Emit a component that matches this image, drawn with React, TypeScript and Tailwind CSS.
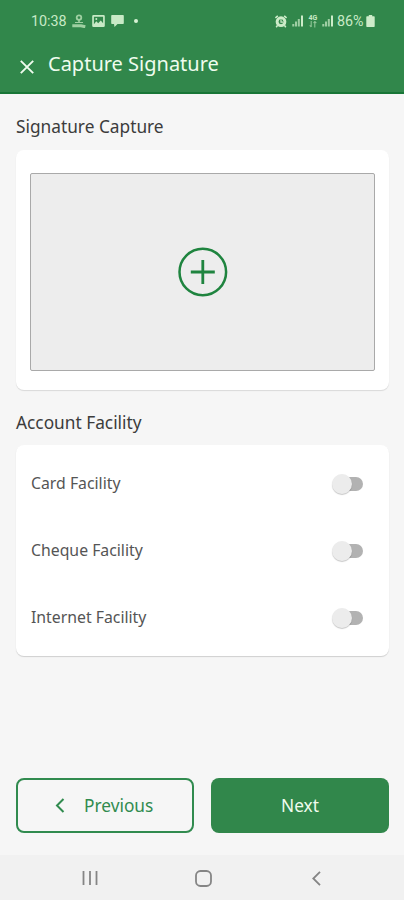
import { useState } from "react";

const FACILITIES = ["Card Facility", "Cheque Facility", "Internet Facility"];

function SignalIcon() {
  return (
    <svg width="12" height="12" viewBox="0 0 12 12" fill="#cdecc9">
      <rect x="0.3" y="9" width="2" height="2.500" opacity="0.700" />
      <rect x="3" y="6.500" width="2" height="5" opacity="0.700" />
      <rect x="5.800" y="4" width="2" height="7.500" opacity="0.700" />
      <rect x="9" y="0.500" width="2" height="11" />
    </svg>
  );
}

function StatusBar() {
  return (
    <div className="flex h-[42px] items-center pl-[31px] pr-[29px] font-[Roboto,sans-serif] text-[14.3px] text-[#c8eac6]">
      <span className="w-[41px] whitespace-nowrap pt-[2px]">10:38</span>
      <svg width="14" height="14" viewBox="0 0 14 14" fill="none" stroke="#9fd0a2">
        <circle cx="7" cy="3.600" r="2.300" strokeWidth="1.800" />
        <path d="M7 6v3" strokeWidth="1.600" />
        <path d="M3 8.500h8" strokeWidth="1" />
        <path d="M.3 11.800h8.700l4.300 1" strokeWidth="3" />
      </svg>
      <svg className="ml-[6px]" width="13" height="12" viewBox="0 0 13 12" fill="#c8eac6">
        <path
          fillRule="evenodd"
          d="M1.500 0h10Q12.800 0 12.800 1.300v9.400Q12.800 12 11.500 12h-10Q.2 12 .2 10.700V1.300Q.2 0 1.500 0zM1.900 1.800v7.400L4.300 6.200 6.200 8.300 8.800 5.500l2.300 2.700V1.800z"
        />
        <circle cx="4.300" cy="4" r="1" />
      </svg>
      <svg className="ml-[6px]" width="13" height="12" viewBox="0 0 13 12" fill="#c8eac6">
        <path d="M1 0h11q.8 0 .8.800v7.400q0 .8-.8.800H6.500L3.500 12 3 9H1q-.8 0-.8-.8V.8Q.2 0 1 0z" />
      </svg>
      <span className="ml-[10px] size-[4px] rounded-full bg-[#d8f2d5]" />

      <div className="ml-auto flex items-center">
        <svg width="12" height="13" viewBox="0 0 12 13" fill="none" stroke="#cdecc9">
          <path d="M.4 3L2.800.8M11.600 3L9.200.8" strokeWidth="1.600" />
          <circle cx="6" cy="6.700" r="3.900" strokeWidth="2.900" />
          <path d="M6 4.500v2.600h2" strokeWidth="1.200" />
          <path d="M2.600 10.300l-1.400 1.900M9.400 10.300l1.400 1.900" strokeWidth="1.500" />
        </svg>
        <div className="ml-[5px]">
          <SignalIcon />
        </div>
        <div className="ml-[4px] flex w-[10px] flex-col items-center">
          <span className="text-[7px] font-bold leading-[6px]">4G</span>
          <svg width="8" height="7" viewBox="0 0 8 7" fill="none" stroke="#8fc596" strokeWidth="1.100">
            <path d="M2.200 0v6M.7 4.300L2.200 6M5.800 6.500V.5M4.500 2L5.800.5l1.500 1.500" />
          </svg>
        </div>
        <div className="ml-[4px]">
          <SignalIcon />
        </div>
        <span className="ml-[3px] w-[29px] whitespace-nowrap pt-[2px]">86%</span>
        <svg width="9" height="12" viewBox="0 0 9 12" fill="#cdecc9">
          <path d="M2.800 0h3.400v1.300h1.800q.7 0 .7.700v9.200q0 .7-.7.700H1q-.7 0-.7-.7V2q0-.7.7-.7h1.800z" />
        </svg>
      </div>
    </div>
  );
}

function Toggle({ on, onClick, label }: { on: boolean; onClick: () => void; label: string }) {
  return (
    <button
      role="switch"
      aria-checked={on}
      aria-label={label}
      onClick={onClick}
      className="flex h-5 w-[31px] items-center"
    >
      <span
        className={`flex h-[14px] w-full items-center rounded-full ${
          on ? "justify-end bg-[#8cc49c]" : "bg-linear-to-r from-transparent from-30% to-[#b2b2b2] to-30%"
        }`}
      >
        <span className="size-5 shrink-0 rounded-full bg-[#ececec] shadow-[0_1px_1px_rgba(0,0,0,0.22)]" />
      </span>
    </button>
  );
}

export default function App() {
  const [enabled, setEnabled] = useState<Record<string, boolean>>({});

  const toggle = (name: string) => {
    setEnabled((prev) => ({ ...prev, [name]: !prev[name] }));
  };

  return (
    <div className="flex h-[900px] w-[404px] flex-col bg-[#f6f6f6] font-['Noto_Sans',sans-serif]">
      <header className="h-[94px] border-b-2 border-[#187637] bg-[#31874b]">
        <StatusBar />
        <div className="flex h-[44px] items-center pl-5">
          <svg className="mt-[5px]" width="14" height="14" viewBox="0 0 14 14" fill="none" stroke="#effcee" strokeWidth="1.900">
            <path d="M.8.8l12.400 12.400M13.200.8L.8 13.200" />
          </svg>
          <h1 className="ml-[14px] whitespace-nowrap text-[20px] leading-7 text-[#effcee]">Capture Signature</h1>
        </div>
      </header>

      <main className="flex flex-1 flex-col pl-4 pr-[15px]">
        <h2 className="flex h-[56px] items-center pt-[9px] text-[17.3px] text-[#3c3c3c]">Signature Capture</h2>
        <section className="h-[240px] rounded-lg bg-white px-[14px] pt-[23px] shadow-[0_1px_1px_rgba(0,0,0,0.12)]">
          <button
            aria-label="Add signature"
            className="flex h-[198px] w-full items-center justify-center rounded-[2px] border-[1.500px] border-[#a9a9a9] bg-[#ededed]"
          >
            <svg width="50" height="50" viewBox="0 0 50 50" fill="none" stroke="#1f843f" strokeWidth="2.500">
              <circle cx="24.800" cy="25" r="23.300" />
              <path d="M24.800 13v24M12.800 25h24" strokeWidth="2.800" />
            </svg>
          </button>
        </section>

        <h2 className="flex h-[55px] items-center pt-[10px] text-[17.3px] text-[#3c3c3c]">Account Facility</h2>
        <section className="flex h-[211px] flex-col rounded-lg bg-white pl-[15px] pr-[26px] pt-[5px] shadow-[0_1px_1px_rgba(0,0,0,0.16)]">
          {FACILITIES.map((name) => (
            <div key={name} className="flex h-[67px] items-center justify-between">
              <span className="text-[15.8px] text-[#555555]">{name}</span>
              <Toggle on={!!enabled[name]} onClick={() => toggle(name)} label={name} />
            </div>
          ))}
        </section>

        <div className="mb-[22px] mt-auto flex justify-between">
          <button className="flex h-[55px] w-[178px] items-center rounded-lg border-2 border-[#318b4f] pl-[37px] text-[17.3px] text-[#318b4f]">
            <svg width="10" height="15" viewBox="0 0 10 15" fill="none" stroke="currentColor" strokeWidth="2">
              <path d="M8.500 1L2 7.500 8.500 14" />
            </svg>
            <span className="ml-[19px]">Previous</span>
          </button>
          <button className="h-[55px] w-[178px] rounded-lg bg-[#31874b] text-[17.3px] text-[#effcee]">Next</button>
        </div>
      </main>

      <nav className="flex h-[45px] items-center bg-[#f1f1f1] pl-[82px] text-[#858585]">
        <svg className="mt-px" width="16" height="14" viewBox="0 0 16 14" fill="none" stroke="currentColor" strokeWidth="1.800">
          <path d="M1.500 0v14M8 0v14M14.500 0v14" />
        </svg>
        <svg className="ml-[97px] mt-px" width="17" height="17" viewBox="0 0 17 17" fill="none" stroke="currentColor" strokeWidth="1.800">
          <rect x="1" y="1" width="15" height="15" rx="4.500" />
        </svg>
        <svg className="ml-[100px] mt-px" width="9" height="15" viewBox="0 0 9 15" fill="none" stroke="currentColor" strokeWidth="1.800">
          <path d="M8 .8L1.300 7.500 8 14.200" />
        </svg>
      </nav>
    </div>
  );
}
